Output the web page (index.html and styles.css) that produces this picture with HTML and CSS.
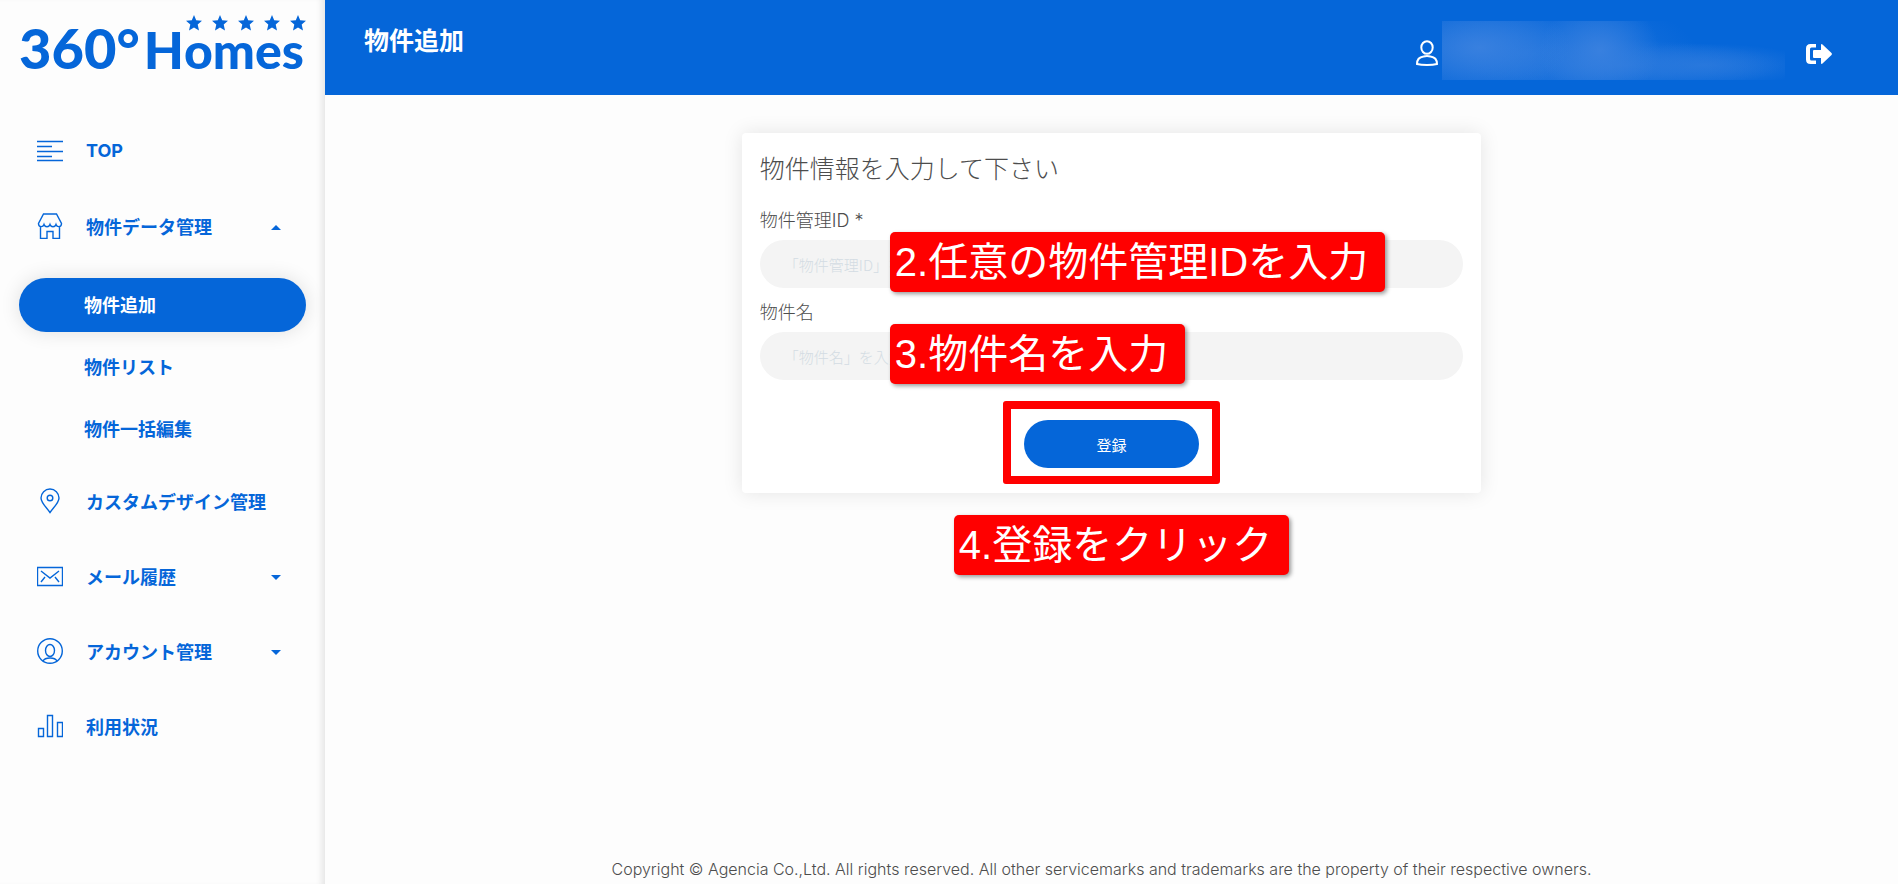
FILE: index.html
```html
<!DOCTYPE html>
<html lang="ja">
<head>
    <meta charset="UTF-8">
    <meta name="viewport" content="width=device-width, initial-scale=1.0">
    <title>物件追加 | 360°Homes</title>
    <link rel="stylesheet" href="styles.css">
</head>
<body>
    <aside class="sidebar">
        <a class="logo" href="#">
            <span class="logo-number">360°</span>
            <span class="logo-h">H</span>
            <span class="logo-rest">
                <svg class="logo-stars" viewBox="0 0 120 17" aria-hidden="true">
                    <defs>
                        <path id="star" d="M8 0L10.200 5.200L16 5.800L11.700 9.500L13 15.500L8 12.400L3 15.500L4.300 9.500L0 5.800L5.800 5.200z"/>
                    </defs>
                    <use href="#star"/>
                    <use href="#star" x="26"/>
                    <use href="#star" x="52"/>
                    <use href="#star" x="78"/>
                    <use href="#star" x="104"/>
                </svg>
                omes
            </span>
        </a>
        <nav class="menu">
            <a class="menu-item" href="#">
                <svg class="menu-icon" viewBox="0 0 26 26"><path d="M0 3.500h26M0 8.500h15M0 13.500h26M0 18.500h15M0 22.500h26"/></svg>
                TOP
            </a>
            <button class="menu-item" type="button" aria-expanded="true">
                <svg class="menu-icon" viewBox="0 0 26 26"><path d="M6.500 1h13l5 9.500c0 4-4.500 4-5.500 1-1 3-5 3-6 0-1 3-5 3-6 0-1 3-5.500 3-5.500-1zM3.500 14v11.500h6.500v-7h6v7h6.500v-11.500"/></svg>
                物件データ管理
                <span class="caret up"></span>
            </button>
            <div class="submenu">
                <a class="submenu-item active" href="#">物件追加</a>
                <a class="submenu-item" href="#">物件リスト</a>
                <a class="submenu-item" href="#">物件一括編集</a>
            </div>
            <a class="menu-item" href="#">
                <svg class="menu-icon" viewBox="0 0 26 26"><path d="M13 24.500C10 20 4 15 4 10a9 9 0 0 1 18 0c0 5-6 10-9 14.500z"/><circle cx="13" cy="10" r="2.800"/></svg>
                カスタムデザイン管理
            </a>
            <button class="menu-item" type="button" aria-expanded="false">
                <svg class="menu-icon" viewBox="0 0 26 26"><path d="M.5 4.500h25v18H.5zM4 8l9 7 9-7M4 19l4-5M22 19l-4-5"/></svg>
                メール履歴
                <span class="caret"></span>
            </button>
            <button class="menu-item" type="button" aria-expanded="false">
                <svg class="menu-icon" viewBox="0 0 26 26"><circle cx="13" cy="13" r="12.300"/><ellipse cx="13" cy="12.500" rx="4.500" ry="6"/><path d="M6 23c2-4 12-4 14 0"/></svg>
                アカウント管理
                <span class="caret"></span>
            </button>
            <a class="menu-item" href="#">
                <svg class="menu-icon" viewBox="0 0 26 26"><path d="M1.500 15.500h5v8h-5zM10.500 2.500h5v21h-5zM20.500 9.500h5v14h-5z"/></svg>
                利用状況
            </a>
        </nav>
    </aside>

    <div class="page">
        <header class="header">
            <h1 class="page-title">物件追加</h1>
            <div class="user">
                <svg class="user-icon" viewBox="0 0 22 26" aria-hidden="true"><ellipse cx="11" cy="7.500" rx="5.700" ry="6.300"/><path d="M7.500 16.500C3.500 17 1 20 1 24c5 1.300 15 1.300 20 0 0-4-2.500-7-6.500-7.500-2-.5-5-.5-7 0z"/></svg>
                <div class="user-name"></div>
                <button class="logout" type="button" aria-label="ログアウト">
                    <svg viewBox="0 0 26 20" aria-hidden="true"><path d="M10 0v3.500H5.500Q4 3.500 4 5v10q0 1.500 1.500 1.500H10V20H4.500Q0 20 0 15.500v-11Q0 0 4.500 0z"/><path d="M15 0.500q.5-.8 1.500 0l9 8.500q.8 1 0 2l-9 8.500q-1 .8-1.500 0V14H8q-1 0-1-1V7q0-1 1-1h7z"/></svg>
                </button>
            </div>
        </header>

        <main class="content">
            <form class="card">
                <h2 class="card-title">物件情報を入力して下さい</h2>
                <div class="field">
                    <label for="property-id">物件管理ID *</label>
                    <input type="text" id="property-id" placeholder="「物件管理ID」を入力して下さい">
                    <span class="note note-field">2.任意の物件管理IDを入力</span>
                </div>
                <div class="field">
                    <label for="property-name">物件名</label>
                    <input type="text" id="property-name" placeholder="「物件名」を入力して下さい">
                    <span class="note note-field">3.物件名を入力</span>
                </div>
                <div class="actions">
                    <button class="submit" type="button">登録</button>
                    <span class="frame"></span>
                    <span class="note note-submit">4.登録をクリック</span>
                </div>
            </form>
        </main>

        <footer class="footer">Copyright © Agencia Co.,Ltd. All rights reserved. All other servicemarks and trademarks are the property of their respective owners.</footer>
    </div>
</body>
</html>
```
FILE: styles.css
```css
*{
    box-sizing: border-box;
}

body{
    margin: 0;
    min-height: 100vh;
    display: flex;
    background: #fdfdfd;
    color: #4d4d4d;
    font-family: "Noto Sans CJK JP", sans-serif;
    font-size: 18px;
}

button, input{
    font-family: inherit;
    border: 0;
}

a{
    color: inherit;
    text-decoration: none;
}

/* sidebar */
.sidebar{
    flex: 0 0 325px;
    min-width: 0;
    padding: 0 19px;
    color: #0566d9;
    box-shadow: inset -7px 0 6px -4px #e4e4e4;
}

.logo{
    display: flex;
    align-items: baseline;
    height: 113px;
    padding-top: 16px;
    font-family: Lato, sans-serif;
    font-size: 56px;
    font-weight: 900;
    line-height: 64px;
}

.logo-h{
    margin-left: 4px;
    font-size: 52px;
}

.logo-rest{
    position: relative;
    font-size: 50px;
}

.logo-stars{
    position: absolute;
    top: -3px;
    left: 2px;
    width: 120px;
    height: 17px;
    fill: #0566d9;
}

.menu-item{
    display: flex;
    align-items: center;
    width: 100%;
    height: 75px;
    padding: 0 25px 0 18px;
    background: none;
    color: #0566d9;
    font-family: Inter, "Noto Sans CJK JP", sans-serif;
    font-size: 18px;
    font-weight: bold;
    text-align: left;
}

.menu-icon{
    width: 26px;
    height: 26px;
    margin-right: 23px;
    fill: none;
    stroke: #0566d9;
    stroke-width: 1.4;
}

.caret{
    margin: 4px 0 0 auto;
    border: 5px solid transparent;
    border-top-color: #0566d9;
    border-bottom: 0;
}

.caret.up{
    border-top: 0;
    border-bottom: 5px solid #0566d9;
}

.submenu{
    padding: 11px 0 3px;
}

.submenu-item{
    display: block;
    height: 54px;
    margin: 4px 0 8px;
    padding-left: 65px;
    border-radius: 27px;
    font-weight: bold;
    line-height: 52px;
}

.submenu-item:last-child{
    margin-bottom: 4px;
}

.submenu-item.active{
    background: #0566d9;
    color: white;
    box-shadow: 0 0 20px rgba(0,0,0,.12);
}

/* right side */
.page{
    flex: 1;
    display: flex;
    flex-direction: column;
}

.header{
    display: flex;
    justify-content: space-between;
    height: 95px;
    padding: 21px 66px 0 39px;
    background: #0566d9;
    color: white;
}

.page-title{
    margin: 0;
    font-size: 25px;
    line-height: 36px;
}

.user{
    display: flex;
    align-items: flex-start;
}

.user-icon{
    width: 22px;
    height: 26px;
    margin: 19px 4px 0 0;
    fill: none;
    stroke: white;
    stroke-width: 2;
}

/* blurred out account name */
.user-name{
    width: 343px;
    height: 59px;
    background:
        radial-gradient(ellipse 90px 45px at 11% 45%, #3880df, transparent),
        radial-gradient(ellipse 60px 50px at 46% 50%, #3880df, transparent),
        radial-gradient(ellipse 160px 25px at 53% 75%, #2878dd, transparent),
        radial-gradient(ellipse 110px 22px at 76% 75%, #2878dd, transparent),
        radial-gradient(ellipse 170px 60px at 25% 55%, #2476dd, transparent);
}

.logout{
    margin: 23px 0 0 21px;
    padding: 0;
    background: none;
}

.logout svg{
    display: block;
    width: 26px;
    height: 20px;
    fill: white;
}

.content{
    flex: 1;
    padding: 38px 0;
}

.card{
    width: 47%;
    margin: 0 auto;
    padding: 18px 18px 25px;
    background: white;
    border-radius: 4px;
    box-shadow: 0 0 20px rgba(0,0,0,.1);
}

.card-title{
    margin: 0 0 23px;
    font-size: 25px;
    font-weight: 300;
    line-height: 32px;
}

.field{
    position: relative;
    margin-bottom: 10px;
}

.field label{
    display: block;
    margin-bottom: 4px;
    font-family: Inter, "Noto Sans CJK JP", sans-serif;
    font-weight: 300;
    line-height: 30px;
}

.field input{
    display: block;
    width: 100%;
    height: 48px;
    padding: 0 24px;
    border-radius: 24px;
    background: #f4f4f4;
    font-size: 15px;
}

.field input::placeholder{
    color: #d3dce3;
    font-weight: 300;
}

.actions{
    position: relative;
    padding-top: 30px;
    text-align: center;
}

.submit{
    width: 175px;
    height: 48px;
    border-radius: 24px;
    background: #0566d9;
    color: white;
    font-size: 15px;
    vertical-align: top;
}

/* step notes over the form */
.note{
    position: absolute;
    padding: 0 17px 0 5px;
    border-radius: 5px;
    background: #f00;
    color: white;
    font-family: "Liberation Sans", "Noto Sans CJK JP", sans-serif;
    font-size: 40px;
    line-height: 60px;
    white-space: nowrap;
    box-shadow: 2px 2px 4px rgba(0,0,0,.4);
}

.note-field{
    top: 26px;
    left: 130px;
}

.note-submit{
    top: 125px;
    left: 194px;
}

.frame{
    position: absolute;
    top: 11px;
    left: 50%;
    width: 217px;
    height: 83px;
    margin-left: -108px;
    border: 8px solid #f00;
    border-radius: 3px;
}

.footer{
    padding: 0 20px 3px 0;
    font-family: Inter, sans-serif;
    font-size: 16px;
    font-weight: 300;
    line-height: 24px;
    text-align: center;
}
```
